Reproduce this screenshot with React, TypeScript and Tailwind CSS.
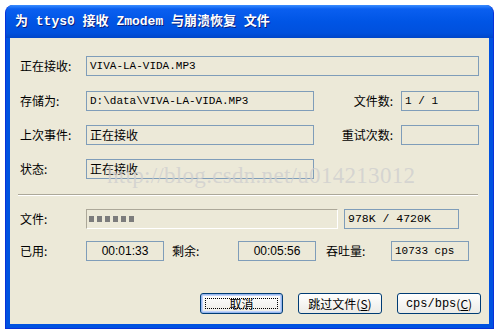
const cjk = "font-['Noto_Sans_CJK_SC','Noto_Sans',sans-serif]"
const mono = "font-['Liberation_Mono','Noto_Sans_CJK_SC',monospace]"

function Field({ w, children, className = '' }: { w: string; children?: React.ReactNode; className?: string }) {
  return (
    <div className={`${w} h-[20px] border border-[#7F9DB9] bg-[#ECE9D8] flex items-center px-[3px] text-[11px] text-black ${className}`}>
      {children}
    </div>
  )
}

function Label({ w, children, right = false }: { w: string; children: React.ReactNode; right?: boolean }) {
  return (
    <div className={`${w} shrink-0 text-[12px] text-black ${cjk} ${right ? 'text-right pr-[8px]' : ''}`}>{children}</div>
  )
}

function Button({ w, children, def = false }: { w: string; children: React.ReactNode; def?: boolean }) {
  return (
    <div
      className={`${w} h-[21px] rounded-[3px] border border-[#003C74] bg-gradient-to-b from-[#FFFFFF] to-[#ECEBE6] flex items-center justify-center text-[12px] text-black ${cjk} ${def ? 'shadow-[inset_0_0_0_1px_#98B8EE,inset_0_0_0_2px_#C1D3FB]' : ''}`}
    >
      {def ? (
        <div className="w-[calc(100%-8px)] h-[calc(100%-8px)] border border-dotted border-black flex items-center justify-center">{children}</div>
      ) : (
        children
      )}
    </div>
  )
}

export default function App() {
  return (
    <div className="w-[500px] h-[333px] bg-white pl-[5px] pt-[5px]">
      <div className="w-[489px] h-[324px] flex flex-col rounded-t-[8px] bg-[#0052E0] border-x border-b border-[#0831D9] overflow-hidden">
        <div className="h-[33px] shrink-0 flex items-center pl-[9px] bg-[linear-gradient(to_bottom,#3A8DFF_0%,#0A5FF0_12%,#0055E5_50%,#0050DD_85%,#0046C8_100%)]">
          <span className={`text-[13px] font-bold text-white ${mono} [text-shadow:1px_1px_0_#0A1E7A] whitespace-pre`}>
            为 ttys0 接收 Zmodem 与崩溃恢复 文件
          </span>
        </div>
        <div className="relative flex-1 mx-[4px] mb-[4px] bg-[#ECE9D8] flex flex-col pl-[10px] pt-[18px]">
          <div className="flex items-center h-[20px]">
            <Label w="w-[66px]">正在接收:</Label>
            <Field w="w-[393px]" className={mono}>VIVA-LA-VIDA.MP3</Field>
          </div>
          <div className="flex items-center h-[20px] mt-[15px]">
            <Label w="w-[66px]">存储为:</Label>
            <Field w="w-[228px]" className={mono}>D:\data\VIVA-LA-VIDA.MP3</Field>
            <Label w="w-[87px]" right>文件数:</Label>
            <Field w="w-[78px]" className={mono}>1 / 1</Field>
          </div>
          <div className="flex items-center h-[20px] mt-[14px]">
            <Label w="w-[66px]">上次事件:</Label>
            <Field w="w-[228px]" className={`${cjk} !text-[12px]`}>正在接收</Field>
            <Label w="w-[87px]" right>重试次数:</Label>
            <Field w="w-[78px]" />
          </div>
          <div className="flex items-center h-[20px] mt-[14px]">
            <Label w="w-[66px]">状态:</Label>
            <Field w="w-[228px]" className={`${cjk} !text-[12px]`}>正在接收</Field>
          </div>

          <div className="mt-[15px] mr-[11px] ml-[-2px] h-[2px] border-t border-[#ACA899] border-b border-b-white" />

          <div className="flex items-center h-[20px] mt-[13px]">
            <Label w="w-[66px]">文件:</Label>
            <div className="w-[252px] h-[20px] border border-t-[#ACA899] border-l-[#ACA899] border-b-white border-r-white flex items-center gap-[3px] pl-[2px]">
              {[0, 1, 2, 3, 4, 5].map((i) => (
                <div key={i} className="w-[5px] h-[6px] bg-[#7C7C7C]" />
              ))}
            </div>
            <div className="w-[6px]" />
            <Field w="w-[115px]" className={`${mono} !text-[11.5px]`}>978K / 4720K</Field>
          </div>

          <div className="flex items-center h-[20px] mt-[12px]">
            <Label w="w-[66px]">已用:</Label>
            <Field w="w-[78px]" className="justify-center font-['Liberation_Sans',sans-serif] !text-[12px]">00:01:33</Field>
            <div className="w-[8px]" />
            <Label w="w-[66px]">剩余:</Label>
            <Field w="w-[78px]" className="justify-center font-['Liberation_Sans',sans-serif] !text-[12px]">00:05:56</Field>
            <div className="w-[10px]" />
            <Label w="w-[65px]">吞吐量:</Label>
            <Field w="w-[78px]" className={mono}>10733 cps</Field>
          </div>

          <div className="flex items-center justify-end gap-[15px] mt-[32px] pr-[8px]">
            <Button w="w-[83px]" def>取消</Button>
            <Button w="w-[84px]">
              跳过文件(<span className="underline">S</span>)
            </Button>
            <Button w="w-[84px]">
              <span className={mono}>cps/bps</span>(<span className="underline">C</span>)
            </Button>
          </div>

          <div className="absolute left-[97px] top-[125px] leading-[26px] text-[23px] tracking-[0.3px] font-['Liberation_Serif',serif] text-[#CFCFCF]/80 pointer-events-none select-none">
            http://blog.csdn.net/u014213012
          </div>
        </div>
      </div>
    </div>
  )
}
